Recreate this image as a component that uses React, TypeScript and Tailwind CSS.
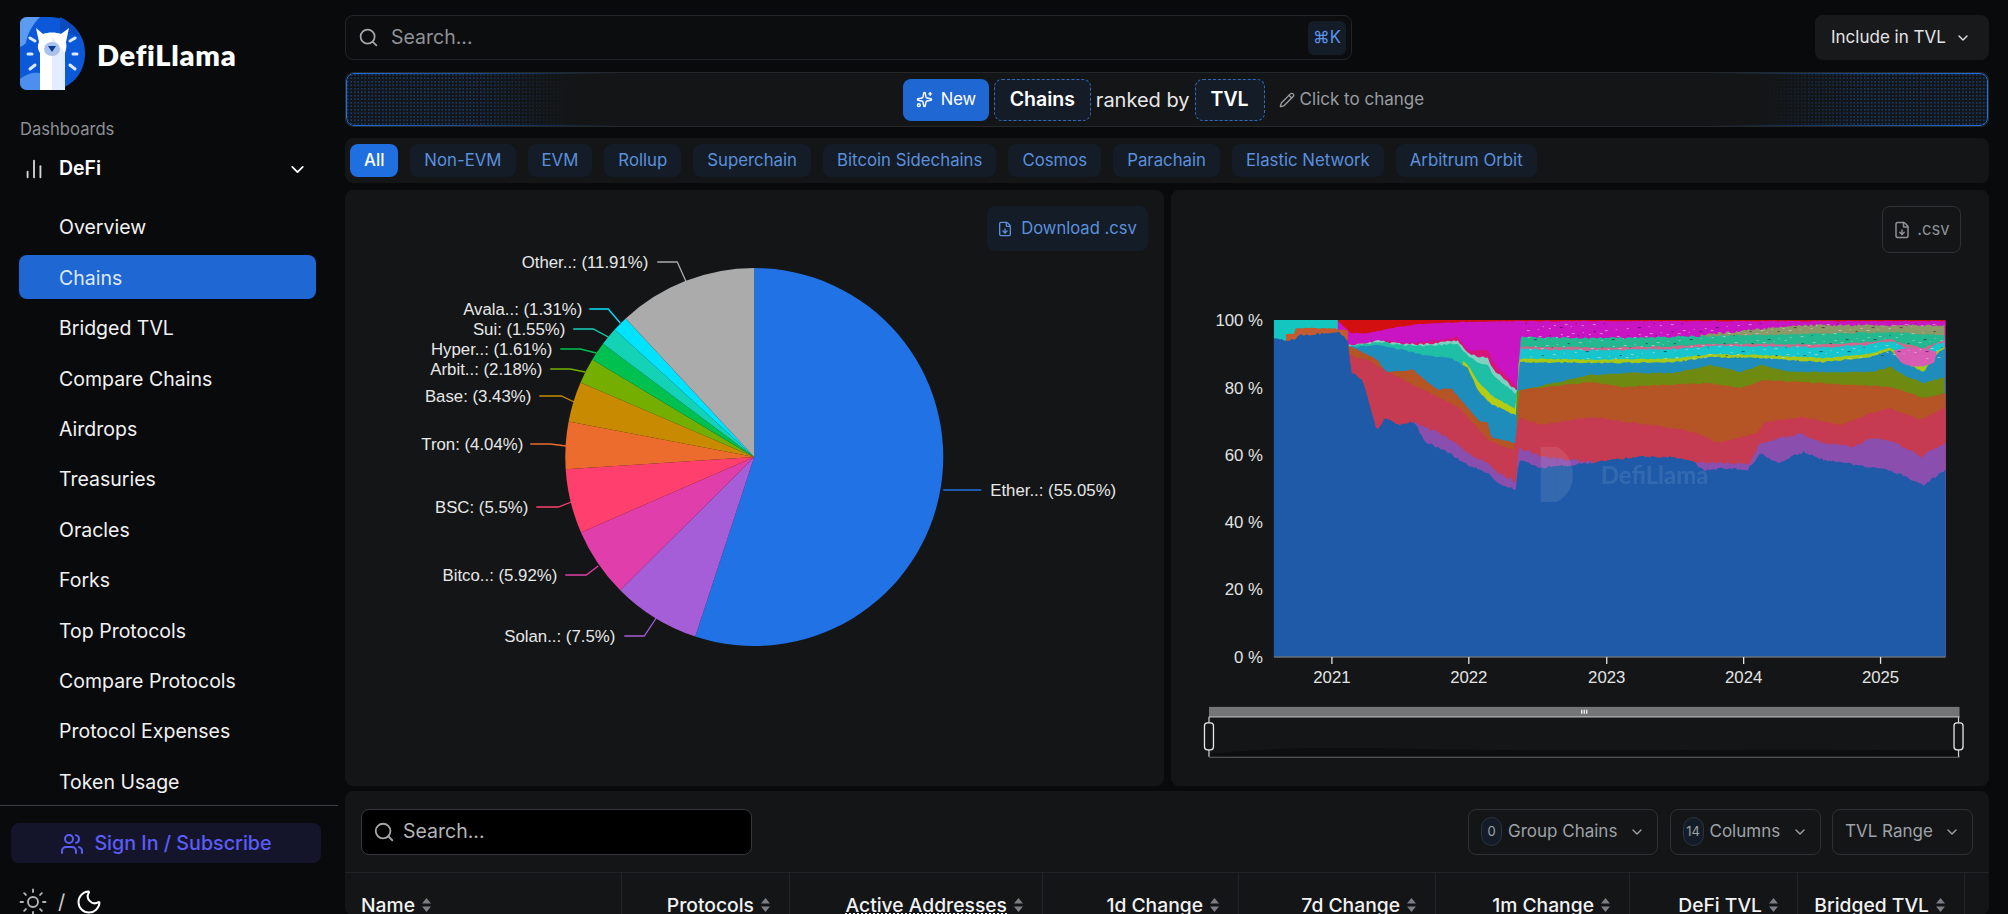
import { ChartNoAxesColumn, ChevronDown, FileDown, Moon, Pencil, Search, Sparkles, Sun, Users } from "lucide-react";

const NAV_ITEMS = [
  "Overview",
  "Chains",
  "Bridged TVL",
  "Compare Chains",
  "Airdrops",
  "Treasuries",
  "Oracles",
  "Forks",
  "Top Protocols",
  "Compare Protocols",
  "Protocol Expenses",
  "Token Usage",
];

const TABS = ["All", "Non-EVM", "EVM", "Rollup", "Superchain", "Bitcoin Sidechains", "Cosmos", "Parachain", "Elastic Network", "Arbitrum Orbit"];

const COLUMNS = [
  { label: "Protocols", width: "w-[168px]" },
  { label: "Active Addresses", width: "w-[253px]", dotted: true },
  { label: "1d Change", width: "w-[196px]" },
  { label: "7d Change", width: "w-[197px]" },
  { label: "1m Change", width: "w-[194px]" },
  { label: "DeFi TVL", width: "w-[168px]" },
  { label: "Bridged TVL", width: "w-[167px]" },
];

// slices run clockwise from 12 o'clock
const PIE = [
  { pct: 55.05, color: "#2172e5" },
  { pct: 7.5, color: "#a65dd8" },
  { pct: 5.92, color: "#e03fab" },
  { pct: 5.5, color: "#ff3f6e" },
  { pct: 4.04, color: "#ec6c2e" },
  { pct: 3.43, color: "#c78a00" },
  { pct: 2.18, color: "#74ae00" },
  { pct: 1.61, color: "#00c04f" },
  { pct: 1.55, color: "#14d2b6" },
  { pct: 1.31, color: "#00e3ff" },
  { pct: 11.91, color: "#ababab" },
];

const PIE_LABELS = [
  { text: "Other..: (11.91%)", x: 648, y: 262, line: "M657 262H677L686 282", color: "#ababab" },
  { text: "Avala..: (1.31%)", x: 582, y: 309, line: "M589 309H608L620 323", color: "#00e3ff" },
  { text: "Sui: (1.55%)", x: 565, y: 329, line: "M573 329H593L608 337", color: "#14d2b6" },
  { text: "Hyper..: (1.61%)", x: 552, y: 349, line: "M560 349H580L596 353", color: "#00c04f" },
  { text: "Arbit..: (2.18%)", x: 542, y: 369, line: "M550 369H570L585 372", color: "#74ae00" },
  { text: "Base: (3.43%)", x: 531, y: 396, line: "M539 396H561L574 402", color: "#c78a00" },
  { text: "Tron: (4.04%)", x: 523, y: 444, line: "M530 444H550L566 446", color: "#ec6c2e" },
  { text: "BSC: (5.5%)", x: 528, y: 507, line: "M536 507H558L571 502", color: "#ff3f6e" },
  { text: "Bitco..: (5.92%)", x: 557, y: 575, line: "M565 575H586L598 566", color: "#e03fab" },
  { text: "Solan..: (7.5%)", x: 615, y: 636, line: "M624 636H644L656 618", color: "#a65dd8" },
];

function piePaths() {
  const cx = 754;
  const cy = 457;
  const r = 189;
  let start = 0;
  return PIE.map((s) => {
    const end = start + (s.pct / 100) * Math.PI * 2;
    const x0 = cx + r * Math.sin(start);
    const y0 = cy - r * Math.cos(start);
    const x1 = cx + r * Math.sin(end);
    const y1 = cy - r * Math.cos(end);
    const large = end - start > Math.PI ? 1 : 0;
    start = end;
    return { d: `M${cx} ${cy}L${x0} ${y0}A${r} ${r} 0 ${large} 1 ${x1} ${y1}Z`, color: s.color };
  });
}

type Pts = number[][];

function at(pts: Pts, x: number) {
  if (x <= pts[0][0]) return pts[0][1];
  for (let i = 1; i < pts.length; i++) {
    if (x <= pts[i][0]) {
      const [x0, y0] = pts[i - 1];
      const [x1, y1] = pts[i];
      return y0 + ((y1 - y0) * (x - x0)) / (x1 - x0);
    }
  }
  return pts[pts.length - 1][1];
}

function noise(i: number, seed: number) {
  const v = Math.sin(i * 12.9898 + seed * 78.233) * 43758.5453;
  return v - Math.floor(v) - 0.5;
}

const BOTTOM = 657;

function area(fn: (x: number) => number, from: number, to: number, amp: number, seed: number) {
  const out: string[] = [`${from},${BOTTOM}`];
  for (let x = from; x <= to; x += 2) {
    out.push(`${x},${Math.max(320, fn(x) + noise(x, seed) * amp).toFixed(1)}`);
  }
  out.push(`${to},${BOTTOM}`);
  return out.join(" ");
}

const RED: Pts = [[1338, 322], [1350, 333], [1367, 333], [1390, 328], [1417, 324], [1457, 322], [1518, 321], [1945, 321]];
const MAG: Pts = [[1347, 345], [1367, 343], [1377, 340], [1403, 343], [1423, 342], [1457, 337], [1467, 350], [1487, 350], [1493, 363], [1515, 385], [1517, 392], [1519, 337], [1600, 338], [1700, 336], [1800, 334], [1900, 332], [1945, 336]];
const TEAL: Pts = [[1347, 347], [1377, 345], [1403, 350], [1423, 355], [1450, 358], [1467, 368], [1477, 390], [1490, 404], [1515, 415], [1518, 362], [1600, 363], [1673, 362], [1710, 357], [1757, 358], [1823, 362], [1870, 357], [1890, 350], [1900, 360], [1923, 372], [1935, 355], [1945, 347]];
const OLIVE: Pts = [[1516, 392], [1520, 390], [1590, 375], [1623, 373], [1673, 373], [1710, 365], [1740, 372], [1760, 365], [1790, 372], [1870, 372], [1890, 367], [1907, 377], [1923, 383], [1945, 377]];
const ORANGE: Pts = [[1347, 345], [1377, 360], [1385, 372], [1413, 370], [1437, 390], [1450, 388], [1477, 420], [1487, 423], [1490, 437], [1515, 443], [1518, 390], [1590, 382], [1623, 387], [1707, 383], [1740, 388], [1763, 380], [1890, 387], [1923, 398], [1945, 393]];
const CRIMSON: Pts = [[1347, 352], [1353, 357], [1367, 360], [1383, 370], [1437, 397], [1457, 407], [1477, 428], [1487, 440], [1513, 450], [1518, 417], [1540, 425], [1590, 417], [1633, 423], [1673, 428], [1697, 433], [1717, 443], [1757, 433], [1763, 422], [1800, 417], [1840, 425], [1870, 413], [1890, 408], [1920, 420], [1945, 407]];
const PURPLE: Pts = [[1413, 422], [1443, 435], [1467, 453], [1487, 463], [1497, 473], [1515, 482], [1518, 447], [1540, 457], [1600, 463], [1750, 463], [1757, 447], [1763, 442], [1800, 433], [1823, 443], [1853, 447], [1870, 438], [1890, 440], [1920, 457], [1945, 443]];
const BLUE: Pts = [[1273, 337], [1287, 342], [1300, 335], [1337, 332], [1347, 340], [1350, 372], [1362, 380], [1376, 432], [1385, 417], [1397, 425], [1413, 422], [1425, 442], [1443, 450], [1467, 465], [1487, 473], [1497, 483], [1515, 490], [1518, 460], [1540, 468], [1590, 463], [1633, 457], [1673, 457], [1690, 460], [1703, 470], [1730, 468], [1747, 470], [1760, 453], [1777, 463], [1803, 452], [1823, 460], [1867, 467], [1890, 470], [1923, 485], [1945, 470]];

const mix = (a: Pts, b: Pts, f: number) => (x: number) => at(a, x) + (at(b, x) - at(a, x)) * f;

const LAYERS = [
  { color: "#13c6c0", points: area(() => 320, 1273, 1347, 0, 1) },
  { color: "#d40f10", points: area(() => 320, 1337, 1945, 0, 1) },
  { color: "#c914c4", points: area((x) => at(RED, x), 1337, 1945, 1, 2) },
  { color: "#8c9a68", points: area((x) => (x < 1800 ? 335 - (x - 1700) * 0.1 : 325), 1700, 1945, 2.5, 19) },
  { color: "#d8147a", points: area((x) => at(MAG, x), 1347, 1518, 2, 3) },
  { color: "#23b890", points: area((x) => at(MAG, x), 1518, 1945, 2, 16) },
  { color: "#7fd2c0", points: area(mix(MAG, TEAL, 0.16), 1347, 1518, 2, 4) },
  { color: "#1fbfa6", points: area(mix(MAG, TEAL, 0.3), 1347, 1518, 2, 17) },
  { color: "#d0688c", points: area(mix(MAG, TEAL, 0.38), 1518, 1945, 1.5, 10) },
  { color: "#16c6cc", points: area(mix(MAG, TEAL, 0.48), 1518, 1945, 2, 5) },
  { color: "#b4cc12", points: area(mix(MAG, TEAL, 0.8), 1462, 1518, 1.2, 6) },
  { color: "#a8c818", points: area(mix(MAG, TEAL, 0.86), 1518, 1945, 1.2, 18) },
  { color: "#1f8dbc", points: area((x) => at(TEAL, x), 1347, 1945, 1.5, 7) },
  { color: "#6f8a10", points: area((x) => at(OLIVE, x), 1516, 1945, 1.5, 8) },
  { color: "#b55424", points: area((x) => at(ORANGE, x), 1347, 1945, 1.5, 11) },
  { color: "#c63a52", points: area((x) => at(CRIMSON, x), 1347, 1945, 2, 12) },
  { color: "#8a4fae", points: area((x) => at(PURPLE, x), 1413, 1945, 3, 13) },
  { color: "#c45a30", points: area((x) => (x < 1295 ? 334 : x < 1337 ? 328 : 330), 1285, 1347, 1, 14) },
  { color: "#1f5aa8", points: area((x) => at(BLUE, x), 1273, 1945, 2.5, 15) },
];

const PINK_BLOB = "M1893 351C1905 346 1925 348 1936 352L1934 362C1925 368 1908 368 1900 362Z";

const SPECKS = Array.from({ length: 260 }, (_, i) => ({
  x: 1525 + ((i * 37) % 418),
  y: 323 + ((i * 23) % 36),
  w: 1 + (i % 3),
  color: i % 4 === 0 ? "#0b0c0e" : "#e3e6e0",
}));

const Y_TICKS = [
  { label: "100 %", y: 320 },
  { label: "80 %", y: 388 },
  { label: "60 %", y: 455 },
  { label: "40 %", y: 522 },
  { label: "20 %", y: 589 },
  { label: "0 %", y: 657 },
];

const X_TICKS = [
  { label: "2021", x: 1331 },
  { label: "2022", x: 1468 },
  { label: "2023", x: 1606 },
  { label: "2024", x: 1743 },
  { label: "2025", x: 1880 },
];

function Logo() {
  return (
    <svg width="65" height="73" viewBox="0 0 65 73" className="shrink-0">
      <path d="M7 0H30C50 0 65 16 65 36.5C65 57 50 73 30 73H7C3 73 0 70 0 66V7C0 3 3 0 7 0Z" fill="#0b58d8" />
      <path d="M7 0H20C12 8 7 18 6 26C4 28 2 29 0 30V7C0 3 3 0 7 0Z" fill="#5b9bf2" />
      <path d="M0 62C8 56 14 55 20 56V73H7C3 73 0 70 0 66Z" fill="#4d8fee" />
      <path d="M40 0C50 4 58 14 60 20L40 14Z" fill="#0a4cc0" />
      <g stroke="#dbe8ff" strokeWidth="3" strokeLinecap="round">
        <path d="M10 21L15 24" />
        <path d="M8 37H12" />
        <path d="M10 52L15 48" />
        <path d="M50 24L55 21" />
        <path d="M53 37H57" />
        <path d="M50 48L55 52" />
      </g>
      <path d="M16 11L23 17C28 15 36 15 41 17L49 11L46 25C47 29 46 33 45 36V73H20V36C18 33 17 29 19 25Z" fill="#ffffff" />
      <path d="M32 20L45 36V73H32Z" fill="#d8e6ff" opacity="0.7" />
      <ellipse cx="32" cy="32" rx="8" ry="7" fill="#a8c2ee" />
      <path d="M28 29H36L32 35Z" fill="#0a3a90" />
    </svg>
  );
}

function SortIcon() {
  return (
    <svg width="11" height="16" viewBox="0 0 11 16" className="shrink-0" fill="#7b7f85">
      <path d="M5.5 1L10 6.5H1Z" />
      <path d="M5.5 15L1 9.5H10Z" />
    </svg>
  );
}

function PieChart() {
  return (
    <svg viewBox="345 190 818 596" className="block h-full w-full">
      {piePaths().map((p) => (
        <path key={p.color} d={p.d} fill={p.color} />
      ))}
      {PIE_LABELS.map((l) => (
        <g key={l.text}>
          <path d={l.line} fill="none" stroke={l.color} strokeWidth="1.3" />
          <text x={l.x} y={l.y + 5.5} textAnchor="end" fontFamily="Liberation Sans" fontSize="16.8" fill="#e8e8e8">
            {l.text}
          </text>
        </g>
      ))}
      <path d="M943 490H981" fill="none" stroke="#2172e5" strokeWidth="1.3" />
      <text x="990" y="495.5" fontFamily="Liberation Sans" fontSize="16.8" fill="#e8e8e8">
        Ether..: (55.05%)
      </text>
    </svg>
  );
}

function AreaChart() {
  return (
    <svg viewBox="1170 190 819 596" className="block h-full w-full">
      {LAYERS.map((l) => (
        <polygon key={l.color} points={l.points} fill={l.color} />
      ))}
      <path d={PINK_BLOB} fill="#d85cb4" />
      {SPECKS.map((s, i) => (
        <rect key={i} x={s.x} y={s.y} width={s.w} height="1" fill={s.color} opacity="0.55" />
      ))}
      <g opacity="0.09" fill="#ffffff">
        <rect x="1540" y="447" width="16" height="55" />
        <path d="M1556 447C1575 455 1580 490 1556 502Z" />
        <text x="1600" y="484" fontFamily="Lato" fontWeight="700" fontSize="24">
          DefiLlama
        </text>
      </g>
      <path d="M1273 657H1945" stroke="#6e7079" strokeWidth="1.5" />
      {Y_TICKS.map((t) => (
        <text key={t.label} x="1262" y={t.y + 6} textAnchor="end" fontFamily="Liberation Sans" fontSize="16.8" fill="#e3e3e3">
          {t.label}
        </text>
      ))}
      {X_TICKS.map((t) => (
        <g key={t.label}>
          <path d={`M${t.x} 657V664`} stroke="#e3e3e3" strokeWidth="1.3" />
          <text x={t.x} y="683" textAnchor="middle" fontFamily="Liberation Sans" fontSize="16.8" fill="#e3e3e3">
            {t.label}
          </text>
        </g>
      ))}
      <rect x="1208" y="707" width="751" height="10" fill="#757575" />
      <path d="M1208 717H1959" stroke="#b5b5b5" strokeWidth="1.3" />
      <path d="M1208 757H1959" stroke="#8c8c8c" strokeWidth="1.3" />
      <path d="M1208 754C1300 746 1340 748 1470 750C1600 752 1750 748 1958 751V757H1208Z" fill="#0d0e0f" />
      <path d="M1581 710V714M1583.5 710V714M1586 710V714" stroke="#ffffff" strokeWidth="1.2" />
      {[1208, 1958].map((x) => (
        <g key={x}>
          <path d={`M${x} 717V757`} stroke="#d0d0d0" strokeWidth="1.2" />
          <rect x={x - 4.5} y="723" width="9" height="27" rx="3" fill="#131516" stroke="#e8e8e8" strokeWidth="1.3" />
        </g>
      ))}
    </svg>
  );
}

function Sidebar() {
  return (
    <aside className="h-[914px] w-[338px] shrink-0">
      <div className="ml-5 flex h-[90px] items-end gap-3">
        <Logo />
        <span className="mb-[14px] font-[family-name:Lato,sans-serif] text-[29px] font-extrabold tracking-wide text-white">DefiLlama</span>
      </div>
      <div className="ml-5 mt-[27px] text-[16.6px] leading-6 text-[#8d9096]">Dashboards</div>
      <div className="ml-[19px] mt-1.5 flex h-11 w-[297px] items-center">
        <ChartNoAxesColumn size={22} className="ml-1 text-[#d5d6d8]" />
        <span className="ml-[14px] text-[19.5px] font-semibold text-white">DeFi</span>
        <ChevronDown size={21} className="ml-auto mr-2 text-white" />
      </div>
      <nav className="mt-[14px] flex flex-col gap-[6.4px]">
        {NAV_ITEMS.map((item) => (
          <div
            key={item}
            className={
              item === "Chains"
                ? "ml-[19px] flex h-11 w-[297px] items-center rounded-lg bg-[#1f67d2] pl-10 pt-0.5 text-[19.5px] text-[#dfe9f8]"
                : "ml-[19px] flex h-11 w-[297px] items-center rounded-lg pl-10 pt-0.5 text-[19.5px] text-[#f2f2f3]"
            }
          >
            {item}
          </div>
        ))}
      </nav>
      <div className="mt-0.5 h-px bg-[#3b3d40]" />
      <div className="ml-[11px] mt-[17px] flex h-10 w-[310px] items-center justify-center gap-2.5 rounded-lg bg-[#14152b] pt-px text-[19.7px] font-medium text-[#5c5cf9]">
        <Users size={24} />
        Sign In / Subscribe
      </div>
      <div className="ml-[18px] mt-6 flex items-center gap-[10px] text-white">
        <Sun size={30} strokeWidth={1.5} className="text-[#b4b5b7]" />
        <span className="text-[20px] leading-7 text-[#d0d0d0]">/</span>
        <Moon size={28} strokeWidth={1.7} />
      </div>
    </aside>
  );
}

function TopBar() {
  return (
    <div className="flex h-[45px] justify-between">
      <div className="flex w-[1007px] items-center rounded-lg border border-[#222427] bg-[#0c0d0e] pl-3 pr-[5px]">
        <Search size={21} className="text-[#a3a5a8]" />
        <span className="ml-3 text-[19.5px] text-[#8f9297]">Search...</span>
        <span className="ml-auto flex h-[34px] w-[38px] items-center justify-center rounded-md bg-[#141c27] text-[16.6px] text-[#5a94e8]">⌘K</span>
      </div>
      <div className="flex w-[174px] items-center justify-between rounded-lg bg-[#18191b] pl-4 pr-[18px] text-[17px] text-[#e4e4e5]">
        Include in TVL
        <ChevronDown size={16} />
      </div>
    </div>
  );
}

function Banner() {
  return (
    <div className="relative mt-3 flex h-[55px] items-center justify-center overflow-hidden rounded-lg border border-[#25282b] bg-[#131516] pl-px pr-2 text-[20px]">
      <div className="absolute inset-y-0 left-0 w-[230px] bg-[radial-gradient(#2172e5_1px,transparent_1.2px)] bg-[length:3.5px_3.5px] opacity-40 [mask-image:linear-gradient(90deg,#000_55%,transparent)]" />
      <div className="absolute inset-y-0 right-0 w-[230px] bg-[radial-gradient(#2172e5_1px,transparent_1.2px)] bg-[length:3.5px_3.5px] opacity-40 [mask-image:linear-gradient(270deg,#000_55%,transparent)]" />
      <div className="absolute inset-0 rounded-lg border border-[#2172e5] [mask-image:linear-gradient(90deg,#000,transparent_17%,transparent_83%,#000)]" />
      <div className="relative flex h-[42px] w-[86px] items-center justify-center gap-2 rounded-lg bg-[#1f67d2] text-[16.6px] text-white">
        <Sparkles size={17} />
        New
      </div>
      <div className="relative ml-[5px] flex h-[42px] w-[97px] items-center justify-center rounded-lg border border-dashed border-[#2f6bbd] bg-[#141c27] text-[19.5px] font-semibold text-white">Chains</div>
      <span className="relative mx-[5px] text-[#e8e8e8]">ranked by</span>
      <div className="relative flex h-[42px] w-[70px] items-center justify-center rounded-lg border border-dashed border-[#2f6bbd] bg-[#141c27] text-[19.5px] font-semibold text-white">TVL</div>
      <Pencil size={16} className="relative ml-[14px] text-[#9a9ca0]" />
      <span className="relative ml-[5px] text-[17px] text-[#9a9ca0]">Click to change</span>
    </div>
  );
}

function TabRow() {
  return (
    <div className="mt-[11px] flex h-[45px] items-center gap-3 rounded-lg bg-[#131516] pl-[5px]">
      {TABS.map((tab) =>
        tab === "All" ? (
          <span key={tab} className="flex h-[33px] items-center rounded-lg bg-[#1f6fe0] px-[14px] text-[16.8px] font-medium text-white">
            {tab}
          </span>
        ) : (
          <span key={tab} className="flex h-[33px] items-center rounded-lg bg-[#141c27] px-[14px] text-[16.8px] text-[#5b90dc]">
            {tab}
          </span>
        ),
      )}
    </div>
  );
}

function Toolbar() {
  return (
    <div className="flex h-[81px] items-center justify-between pl-4 pr-4">
      <div className="flex h-[46px] w-[391px] items-center gap-2 rounded-lg border border-[#36383b] bg-black pl-[11px]">
        <Search size={22} className="text-[#a3a5a8]" />
        <span className="text-[19.5px] text-[#b3b5b8]">Search...</span>
      </div>
      <div className="flex gap-[11.5px] text-[17px] text-[#9fa2a7]">
        <div className="flex h-[46px] w-[190px] items-center rounded-lg border border-[#2e3033] pl-[12px] pr-3">
          <span className="flex h-[29px] w-[21px] items-center justify-center rounded-full border border-[#2b3440] bg-[#141c27] text-[13px]">0</span>
          <span className="ml-[6px]">Group Chains</span>
          <ChevronDown size={16} className="ml-auto" />
        </div>
        <div className="flex h-[46px] w-[151px] items-center rounded-lg border border-[#2e3033] pl-[12px] pr-3">
          <span className="flex h-[29px] w-[21px] items-center justify-center rounded-full border border-[#2b3440] bg-[#141c27] text-[13px]">14</span>
          <span className="ml-[6px]">Columns</span>
          <ChevronDown size={16} className="ml-auto" />
        </div>
        <div className="flex h-[46px] w-[141px] items-center rounded-lg border border-[#2e3033] pl-[12px] pr-3">
          <span>TVL Range</span>
          <ChevronDown size={16} className="ml-auto" />
        </div>
      </div>
    </div>
  );
}

function TableHead() {
  return (
    <div className="flex h-[65px] border-t border-[#212326] text-[19.3px] font-medium leading-[18px] text-[#f2f2f3]">
      <div className="flex w-[277px] items-center gap-1.5 border-r border-[#212326] pl-4">
        Name
        <SortIcon />
      </div>
      {COLUMNS.map((col) => (
        <div key={col.label} className={`flex ${col.width} items-center justify-end gap-1.5 border-r border-[#212326] pr-[18px]`}>
          <span className={col.dotted ? "underline decoration-dotted underline-offset-2" : ""}>{col.label}</span>
          <SortIcon />
        </div>
      ))}
    </div>
  );
}

export default function App() {
  return (
    <div className="flex h-[914px] overflow-hidden bg-[#090a0b] font-[family-name:Inter,sans-serif]">
      <Sidebar />
      <main className="ml-[7px] mr-[19px] min-w-0 flex-1 pt-[15px]">
        <TopBar />
        <Banner />
        <TabRow />
        <div className="mt-[7px] grid h-[596px] grid-cols-2 gap-[7px]">
          <div className="relative overflow-hidden rounded-lg bg-[#131516]">
            <PieChart />
            <div className="absolute right-4 top-4 flex h-[45px] w-[161px] items-center justify-center gap-2 rounded-lg bg-[#141c27] text-[16.6px] text-[#5b90dc]">
              <FileDown size={16} />
              Download .csv
            </div>
          </div>
          <div className="relative overflow-hidden rounded-lg bg-[#131516]">
            <AreaChart />
            <div className="absolute right-7 top-4 flex h-[47px] w-[79px] items-center justify-center gap-1.5 rounded-lg border border-[#2f3134] text-[16.6px] text-[#8f9297]">
              <FileDown size={18} />
              .csv
            </div>
          </div>
        </div>
        <div className="mt-[5px] h-[124px] overflow-hidden rounded-lg bg-[#131516]">
          <Toolbar />
          <TableHead />
        </div>
      </main>
    </div>
  );
}
